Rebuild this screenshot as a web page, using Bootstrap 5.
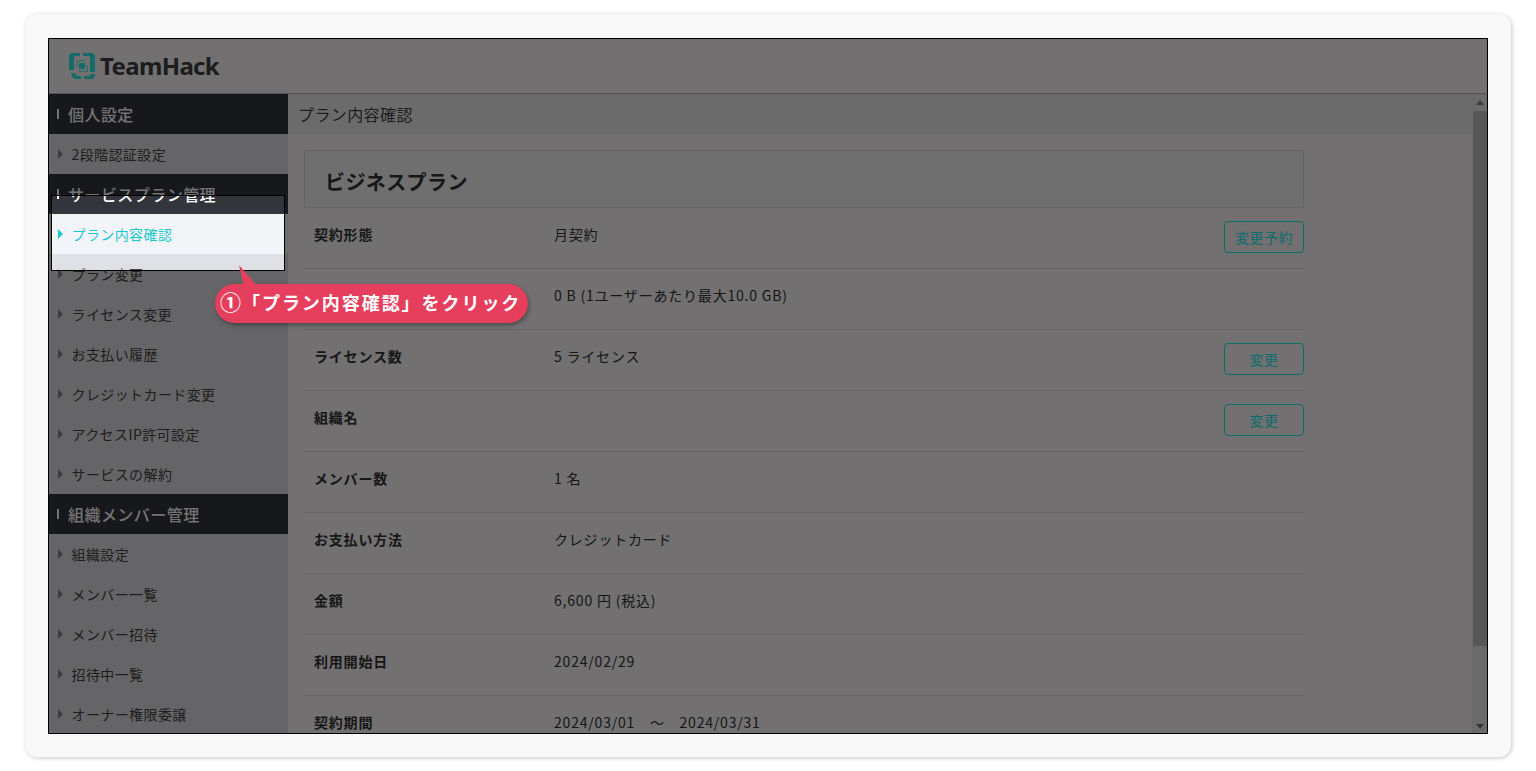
<!DOCTYPE html>
<html lang="ja">
<head>
<meta charset="utf-8">
<title>TeamHack</title>
<link href="https://cdn.jsdelivr.net/npm/bootstrap@5.3.0/dist/css/bootstrap.min.css" rel="stylesheet">
<style>
html,body{height:100%;overflow:hidden;background:#fff}
body{font-family:"Noto Sans CJK JP","Noto Sans",sans-serif;color:#333}
.shell{margin:14px 0 0 25px;width:1486px;height:743px;padding:24px 23px;background:#f8f8f8;border-radius:12px;box-shadow:1px 1px 4px rgba(0,0,0,.22)}
.frame{position:relative;width:1440px;height:696px;border:1px solid #000;overflow:hidden;background:#fcf9fa}
.topbar{height:55px;padding-left:20px;border-bottom:1px solid #bbb;background:#fcf9fa}
.wordmark{font-family:"Noto Sans",sans-serif;font-size:24px;font-weight:700;color:#3f3f3f;letter-spacing:-.65px;line-height:1;margin:-1px 0 0 5px}
.rail{width:239px;flex:none;background:#dfe1e6}
.rail-head{height:40px;padding-left:8px;background:#33353c;color:#fff;font-size:16px;font-weight:500;letter-spacing:.45px}
.rail-head i{display:block;width:2px;height:10px;background:#fff;margin-right:9px}
.rail-item{height:40px;padding:0 0 0 9px;color:#444;font-size:14px;letter-spacing:.4px}
.rail-item i{display:block;border-left:5px solid #888;border-top:5px solid transparent;border-bottom:5px solid transparent;margin-right:8.500px}
.rail-item.on{background:#f3f4f7;color:#1cc8cf}
.rail-item.on i{border-left-color:#1cc8cf}
.pane{flex:1;min-width:0;position:relative}
.crumb{height:40px;padding-left:10px;background:#eeeeee;font-size:16px;letter-spacing:.4px;color:#444}
.sheet{padding:16px 16px 0}
.plan-box{width:1000px;height:58px;padding:5px 0 0 20px;border:1px solid #ddd;background:#f7f6f6;font-size:20px;font-weight:700;letter-spacing:.4px;color:#333}
.plan-row{width:1000px;height:61px;padding:0 0 8px 10px;border-bottom:1px solid #ddd;font-size:14px;letter-spacing:.8px}
.plan-row b{display:block;width:240px;font-weight:700;letter-spacing:.8px;margin-top:1px}
.plan-row span{flex:1}
.tbtn{width:80px;height:32px;padding:0;border:1px solid #19f0f0;border-radius:4px;background:transparent;color:#19f0f0;font-size:14px;letter-spacing:.4px;line-height:30px;margin-top:6px}
.sbar{position:absolute;top:0;right:0;bottom:0;width:15px;background:#eee}
.sbar i{position:absolute;left:1px;right:0;top:17px;height:535px;background:#c2c0c0}
.sbar u,.sbar s{position:absolute;left:4px;width:0;border-left:4px solid transparent;border-right:4px solid transparent}
.sbar u{top:6px;border-bottom:5px solid #888}
.sbar s{bottom:5px;border-top:5px solid #777}
.spot{position:absolute;left:2px;top:156px;width:234px;height:76px;border:1px solid #000;box-shadow:0 0 0 3000px rgba(0,0,0,.55)}
.callout{position:absolute;left:166px;top:245px;width:313px;height:39px;padding:0 0 4px 5px;border-radius:20px;background:#e63e5d;color:#fff;font-size:18px;font-weight:700;letter-spacing:1.95px;white-space:nowrap;box-shadow:1px 2px 4px rgba(0,0,0,.35)}
.callout svg{position:absolute;left:23px;top:-19px}
.callout em{font-style:normal;font-size:21px;letter-spacing:1px}
</style>
</head>
<body>
<div class="shell">
  <div class="frame">
    <div class="topbar d-flex align-items-center">
      <svg width="26" height="26" viewBox="0 0 26 26" fill="#30eee6"><path d="M0 4Q0 0 4 0H11V3H7Q5 3 5 5V17H0Z"/><path d="M14 0H22Q26 0 26 4V19H21V5Q21 3 19 3H14Z"/><path d="M2 20H6Q7 23 9 23H12V26H7Q3 26 2 20Z"/><path d="M15 23H21V21H26V22Q26 26 22 26H15Z"/><path d="M10 10H16V16H10Z"/><path d="M7 14V7H16V8.500H8.500V14ZM19 12V19H10V17.500H17.500V12Z" opacity=".6"/></svg>
      <div class="wordmark">TeamHack</div>
    </div>
    <div class="d-flex" style="height:640px">
      <div class="rail">
        <div class="rail-head d-flex align-items-center"><i></i>個人設定</div>
        <div class="rail-item d-flex align-items-center"><i></i>2段階認証設定</div>
        <div class="rail-head d-flex align-items-center"><i></i>サービスプラン管理</div>
        <div class="rail-item on d-flex align-items-center"><i></i>プラン内容確認</div>
        <div class="rail-item d-flex align-items-center"><i></i>プラン変更</div>
        <div class="rail-item d-flex align-items-center"><i></i>ライセンス変更</div>
        <div class="rail-item d-flex align-items-center"><i></i>お支払い履歴</div>
        <div class="rail-item d-flex align-items-center"><i></i>クレジットカード変更</div>
        <div class="rail-item d-flex align-items-center"><i></i>アクセスIP許可設定</div>
        <div class="rail-item d-flex align-items-center"><i></i>サービスの解約</div>
        <div class="rail-head d-flex align-items-center"><i></i>組織メンバー管理</div>
        <div class="rail-item d-flex align-items-center"><i></i>組織設定</div>
        <div class="rail-item d-flex align-items-center"><i></i>メンバー一覧</div>
        <div class="rail-item d-flex align-items-center"><i></i>メンバー招待</div>
        <div class="rail-item d-flex align-items-center"><i></i>招待中一覧</div>
        <div class="rail-item d-flex align-items-center"><i></i>オーナー権限委譲</div>
      </div>
      <div class="pane">
        <div class="crumb d-flex align-items-center">プラン内容確認</div>
        <div class="sheet">
          <div class="plan-box d-flex align-items-center">ビジネスプラン</div>
          <div class="plan-row d-flex align-items-center"><b>契約形態</b><span>月契約</span><button class="tbtn">変更予約</button></div>
          <div class="plan-row d-flex align-items-center"><b></b><span>0 B (1ユーザーあたり最大10.0 GB)</span></div>
          <div class="plan-row d-flex align-items-center"><b>ライセンス数</b><span>5 ライセンス</span><button class="tbtn">変更</button></div>
          <div class="plan-row d-flex align-items-center"><b>組織名</b><span></span><button class="tbtn">変更</button></div>
          <div class="plan-row d-flex align-items-center"><b>メンバー数</b><span>1 名</span></div>
          <div class="plan-row d-flex align-items-center"><b>お支払い方法</b><span>クレジットカード</span></div>
          <div class="plan-row d-flex align-items-center"><b>金額</b><span>6,600 円 (税込)</span></div>
          <div class="plan-row d-flex align-items-center"><b>利用開始日</b><span>2024/02/29</span></div>
          <div class="plan-row d-flex align-items-center"><b>契約期間</b><span>2024/03/01　～　2024/03/31</span></div>
        </div>
        <div class="sbar"><u></u><i></i><s></s></div>
      </div>
    </div>
    <div class="spot"></div>
    <div class="callout d-flex align-items-center">
      <svg width="20" height="22" viewBox="0 0 20 22"><path d="M1 0L19 21H6Z" fill="#e63e5d"/></svg>
      <span><em>①</em>「プラン内容確認」をクリック</span>
    </div>
  </div>
</div>
</body>
</html>
